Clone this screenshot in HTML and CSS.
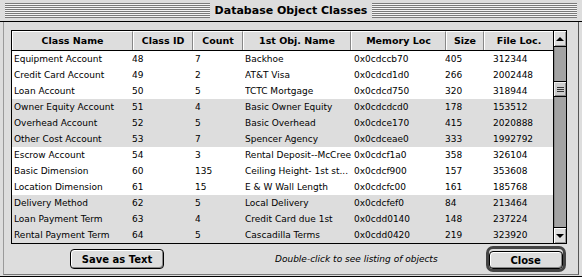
FILE: index.html
```html
<!DOCTYPE html>
<html lang="en">
<head>
  <meta charset="UTF-8" />
  <title>Database Object Classes</title>
  <link rel="stylesheet" href="styles.css">
</head>
<body>

  <div class="window">
    <!-- TITLE BAR -->
    <div class="titlebar">
      <div class="stripes"></div>
      <h1 class="title">Database Object Classes</h1>
      <div class="stripes"></div>
    </div>

    <div class="content">
      <!-- LIST -->
      <div class="listbox">
        <div class="table">
          <div class="header">
            <div class="hcell">Class Name</div>
            <div class="hcell">Class ID</div>
            <div class="hcell">Count</div>
            <div class="hcell">1st Obj. Name</div>
            <div class="hcell">Memory Loc</div>
            <div class="hcell">Size</div>
            <div class="hcell last">File Loc.</div>
          </div>
          <div class="rows" id="rows"></div>
        </div>

        <div class="scrollbar">
          <div class="arrow up"><span class="tri-up"></span></div>
          <div class="track">
            <div class="thumb"><span class="grip"></span></div>
          </div>
          <div class="arrow down"><span class="tri-down"></span></div>
        </div>
      </div>

      <!-- BOTTOM BAR -->
      <div class="footer">
        <button class="btn save">Save as Text</button>
        <span class="hint">Double-click to see listing of objects</span>
        <div class="default-ring">
          <button class="btn close">Close</button>
        </div>
      </div>
    </div>
  </div>

  <script>
    const classes = [
      ["Equipment Account", 48, 7, "Backhoe", "0x0cdccb70", 405, 312344],
      ["Credit Card Account", 49, 2, "AT&T Visa", "0x0cdcd1d0", 266, 2002448],
      ["Loan Account", 50, 5, "TCTC Mortgage", "0x0cdcd750", 320, 318944],
      ["Owner Equity Account", 51, 4, "Basic Owner Equity", "0x0cdcdcd0", 178, 153512],
      ["Overhead Account", 52, 5, "Basic Overhead", "0x0cdce170", 415, 2020888],
      ["Other Cost Account", 53, 7, "Spencer Agency", "0x0cdceae0", 333, 1992792],
      ["Escrow Account", 54, 3, "Rental Deposit--McCree", "0x0cdcf1a0", 358, 326104],
      ["Basic Dimension", 60, 135, "Ceiling Height- 1st st...", "0x0cdcf900", 157, 353608],
      ["Location Dimension", 61, 15, "E & W Wall Length", "0x0cdcfc00", 161, 185768],
      ["Delivery Method", 62, 5, "Local Delivery", "0x0cdcfef0", 84, 213464],
      ["Loan Payment Term", 63, 4, "Credit Card due 1st", "0x0cdd0140", 148, 237224],
      ["Rental Payment Term", 64, 5, "Cascadilla Terms", "0x0cdd0420", 219, 323920]
    ];

    const rows = document.getElementById("rows");

    classes.forEach((c, i) => {
      const row = document.createElement("div");
      // rows are banded in groups of three
      row.className = Math.floor(i / 3) % 2 ? "row shaded" : "row";
      c.forEach(value => {
        const cell = document.createElement("div");
        cell.className = "cell";
        cell.textContent = value;
        row.appendChild(cell);
      });
      rows.appendChild(row);
    });
  </script>
</body>
</html>
```

FILE: styles.css
```css
body {
  margin: 0;
  padding: 0;
  background: #dddddd;
  font-family: "DejaVu Sans", Verdana, sans-serif;
  color: #000;
}

.window {
  width: 582px;
  height: 277px;
  box-sizing: border-box;
  background: #dddddd;
  border-bottom: 1px solid #000;
  display: flex;
  flex-direction: column;
}

/* title bar */
.titlebar {
  height: 21px;
  border-bottom: 1px solid #000;
  display: flex;
  align-items: center;
  padding: 0 5px 0 5px;
}

.stripes {
  flex: 1;
  height: 15px;
  background: repeating-linear-gradient(#7a7a7a 0 1px, #f4f4f4 1px 2px);
}

.title {
  margin: 0;
  padding: 0 5px;
  font-size: 11px;
  font-weight: bold;
  white-space: nowrap;
}

.content {
  flex: 1;
  margin: 0 3px 1px 3px;
  border-left: 1px solid #9a9a9a;
  border-right: 1px solid #555;
  border-bottom: 1px solid #777;
  padding: 8px 0 0 7px;
  display: flex;
  flex-direction: column;
}

/* list box */
.listbox {
  width: 556px;
  height: 214px;
  box-sizing: border-box;
  border: 1px solid #000;
  display: flex;
  background: #fff;
}

.table {
  width: 541px;
  display: flex;
  flex-direction: column;
}

.header {
  height: 19px;
  border-bottom: 1px solid #000;
  background: #dddddd;
  display: grid;
  grid-template-columns: 121px 60px 50px 108px 95px 38px 69px;
}

.hcell {
  font-size: 9.5px;
  font-weight: bold;
  text-align: center;
  border-top: 1px solid #fff;
  border-left: 1px solid #fff;
  border-right: 1px solid #888;
  line-height: 17px;
  white-space: nowrap;
  overflow: hidden;
}

.hcell.last {
  border-right: none;
}

.row {
  height: 16px;
  display: grid;
  grid-template-columns: 120px 63px 50px 109px 91px 48px 60px;
  font-size: 9px;
  line-height: 16px;
}

.row.shaded {
  background: #dddddd;
}

.cell {
  white-space: nowrap;
  overflow: hidden;
}

.cell:first-child {
  padding-left: 2px;
}

/* scrollbar */
.scrollbar {
  width: 13px;
  border-left: 1px solid #000;
  display: flex;
  flex-direction: column;
}

.arrow {
  height: 15px;
  background: #dddddd;
  display: flex;
  align-items: center;
  justify-content: center;
  box-shadow: inset 1px 1px #fff, inset -1px -1px #999;
}

.arrow.up {
  border-bottom: 1px solid #000;
}

.arrow.down {
  border-top: 1px solid #000;
}

.tri-up,
.tri-down {
  width: 0;
  height: 0;
  border-left: 4px solid transparent;
  border-right: 4px solid transparent;
}

.tri-up {
  border-bottom: 4px solid #000;
}

.tri-down {
  border-top: 4px solid #000;
}

.track {
  flex: 1;
  background: #a3a3a3;
  padding-top: 34px;
  box-shadow: inset 1px 0 #888;
}

.thumb {
  height: 14px;
  border-top: 1px solid #000;
  border-bottom: 1px solid #000;
  background: #cccccc;
  box-shadow: inset 1px 1px #eee, inset -1px -1px #888;
  display: flex;
  align-items: center;
  justify-content: center;
}

.grip {
  width: 7px;
  height: 5px;
  background: repeating-linear-gradient(#333 0 1px, transparent 1px 2px);
}

/* footer */
.footer {
  flex: 1;
  display: flex;
  align-items: center;
  padding: 0 0 0 59px;
}

.btn {
  font-family: "DejaVu Sans", Verdana, sans-serif;
  font-size: 10px;
  font-weight: bold;
  background: #dddddd;
  border: 1px solid #000;
  border-radius: 4px;
  box-shadow: inset 1px 1px #fff, inset -1px -1px #888;
  padding: 0;
  cursor: pointer;
}

.save {
  width: 94px;
  height: 20px;
}

.hint {
  font-size: 9px;
  font-style: italic;
  margin-left: 111px;
  white-space: nowrap;
}

.default-ring {
  margin-left: 48px;
  border: 3px solid #444;
  border-radius: 7px;
  padding: 0;
}

.close {
  width: 74px;
  height: 18px;
}
```
